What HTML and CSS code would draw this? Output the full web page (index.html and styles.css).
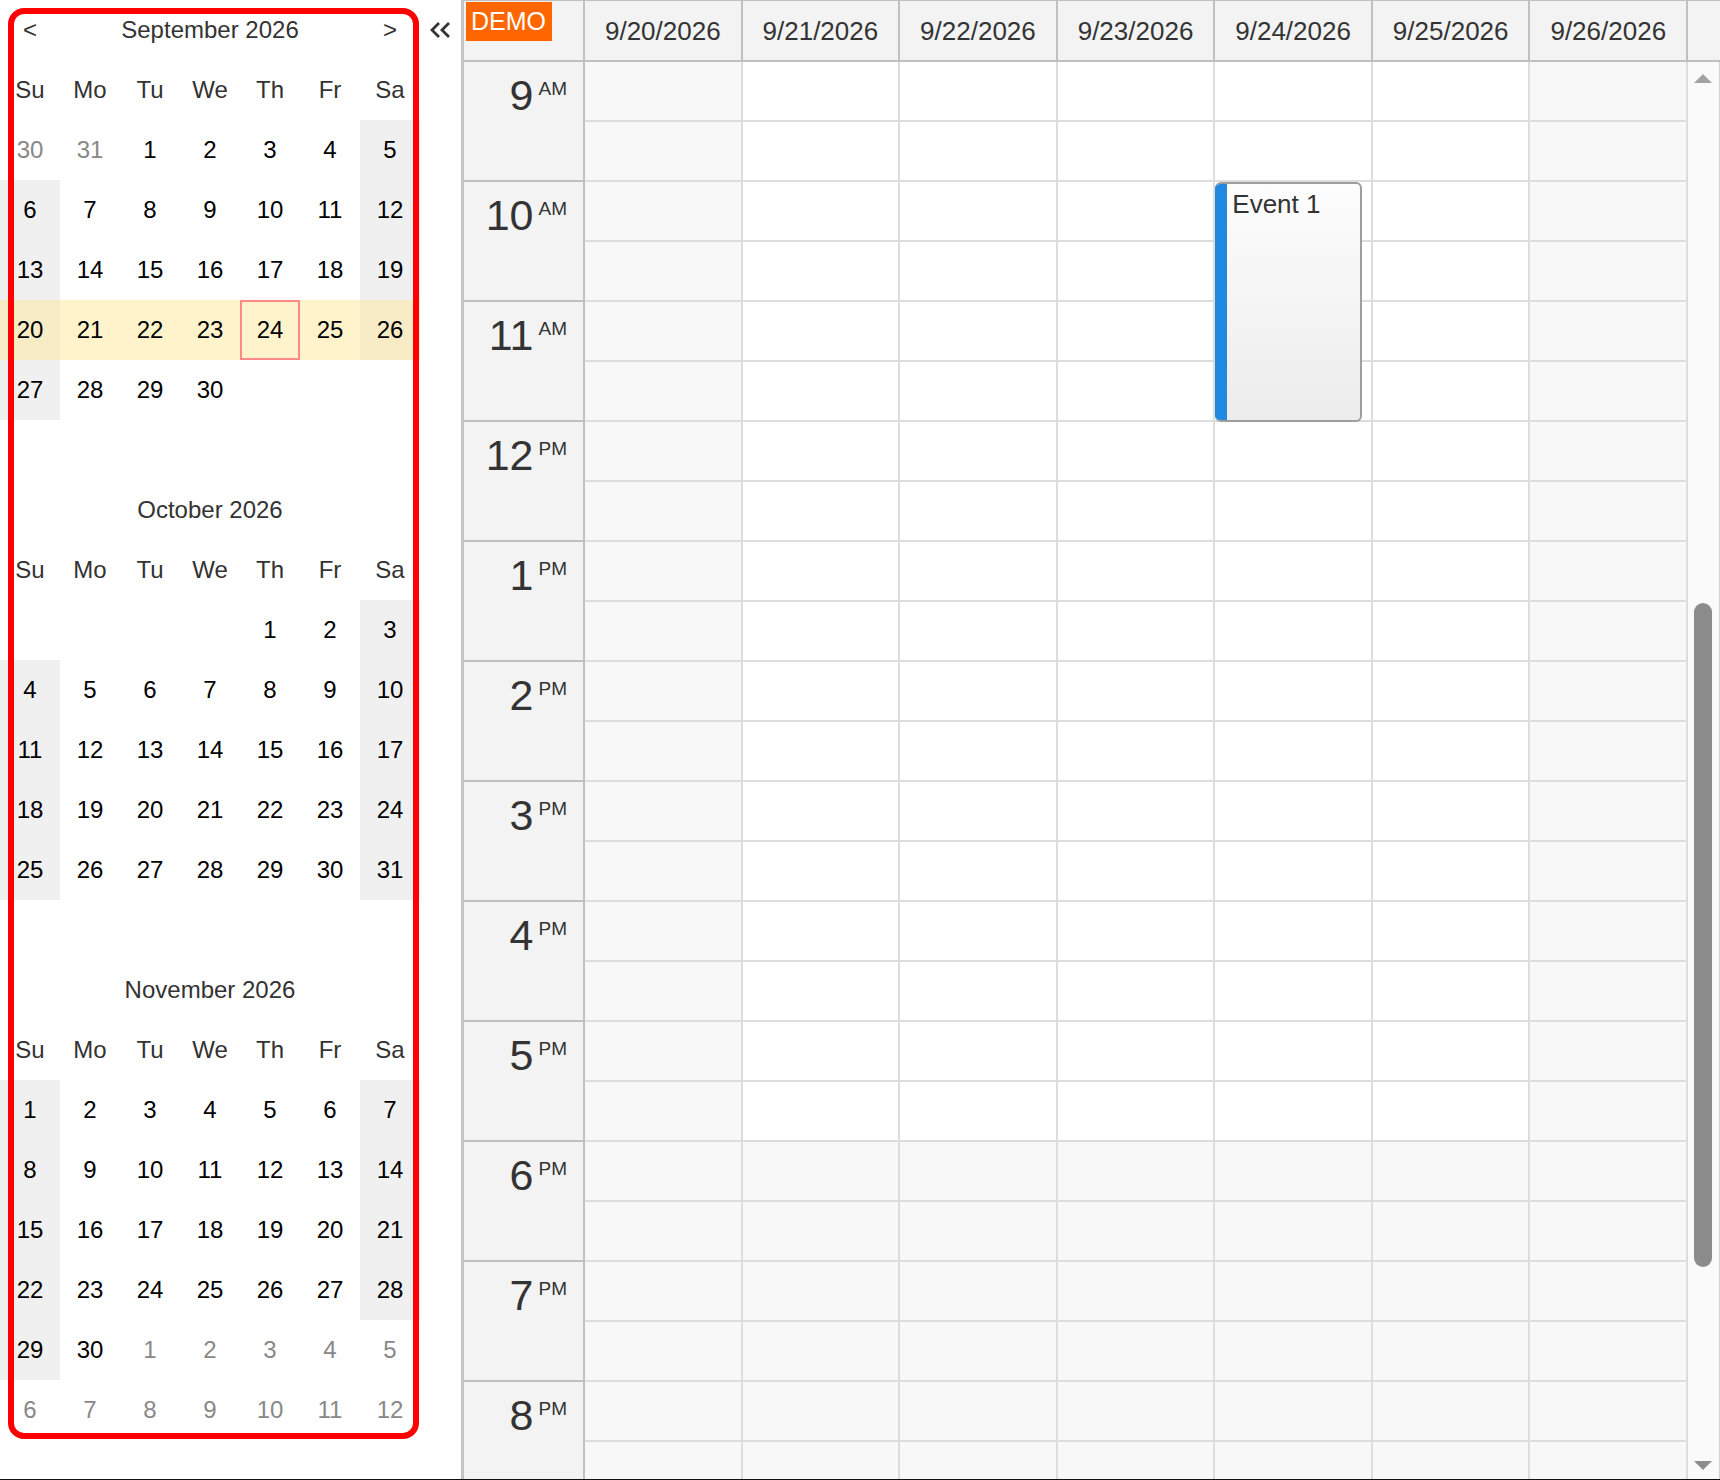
FILE: index.html
```html
<!DOCTYPE html>
<html lang="en">
<head>
  <meta charset="UTF-8" />
  <meta name="viewport" content="width=device-width, initial-scale=1.0" />
  <title>Week Calendar</title>
  <link rel="stylesheet" href="styles.css">
</head>
<body>
  <div class="page">
    <div class="nav" id="nav">
      <div class="nav-frame"></div>
    </div>

    <div class="toggle">
      <svg width="24" height="18" viewBox="0 0 24 18">
        <path d="M11 2 4 9l7 7M21 2l-7 7 7 7" fill="none" stroke="#333" stroke-width="2.8" />
      </svg>
    </div>

    <div class="calendar">
      <div class="cal-head">
        <div class="corner"><span class="demo">DEMO</span></div>
        <div class="colhead">9/20/2026</div>
        <div class="colhead">9/21/2026</div>
        <div class="colhead">9/22/2026</div>
        <div class="colhead">9/23/2026</div>
        <div class="colhead">9/24/2026</div>
        <div class="colhead">9/25/2026</div>
        <div class="colhead">9/26/2026</div>
        <div class="scroll-corner"></div>
      </div>
      <div class="cal-body">
        <div class="rowheads" id="rowheads"></div>
        <div class="days" id="days"></div>
        <div class="vscroll">
          <div class="arrow-up"></div>
          <div class="thumb"></div>
          <div class="arrow-down"></div>
        </div>
      </div>
    </div>
  </div>

  <script>
    const nav = document.getElementById('nav');
    const dayNames = ['Su','Mo','Tu','We','Th','Fr','Sa'];

    // name, weekday of the 1st, days, days in previous month, show prev/next month days
    const months = [
      { name: 'September 2026', start: 2, days: 30, prevDays: 31, prev: true, next: false, arrows: true },
      { name: 'October 2026', start: 4, days: 31, prevDays: 30, prev: false, next: false },
      { name: 'November 2026', start: 0, days: 30, prevDays: 31, prev: false, next: true }
    ];

    months.forEach(m => {
      const el = document.createElement('div');
      el.className = 'nav-month';
      let html = '';
      html += `<div class="nav-arrow">${m.arrows ? '&lt;' : ''}</div>`;
      html += `<div class="nav-title">${m.name}</div>`;
      html += `<div class="nav-arrow">${m.arrows ? '&gt;' : ''}</div>`;
      html += dayNames.map(d => `<div class="nav-dayname">${d}</div>`).join('');
      for (let i = 0; i < 42; i++) {
        const d = i - m.start + 1;
        const dow = i % 7;
        let cls = [];
        let text = '';
        if (d < 1) {
          if (m.prev) { text = m.prevDays + d; cls.push('other'); }
        } else if (d > m.days) {
          if (m.next) { text = d - m.days; cls.push('other'); }
        } else {
          text = d;
          if (dow === 0 || dow === 6) cls.push('weekend');
          if (m.arrows && d >= 20 && d <= 26) cls.push('selected');
          if (m.arrows && d === 24) cls.push('today');
        }
        html += `<div class="${cls.join(' ')}">${text}</div>`;
      }
      el.innerHTML = html;
      nav.appendChild(el);
    });

    // Row headers 9 AM .. 8 PM
    const rowheads = document.getElementById('rowheads');
    for (let h = 9; h <= 20; h++) {
      const label = h % 12 || 12;
      const suffix = h < 12 ? 'AM' : 'PM';
      rowheads.insertAdjacentHTML('beforeend',
        `<div class="rowhead"><span class="hour">${label}</span><span class="ampm">${suffix}</span></div>`);
    }

    // Day columns, half-hour cells
    const days = document.getElementById('days');
    for (let c = 0; c < 7; c++) {
      const col = document.createElement('div');
      col.className = 'day';
      const weekend = c === 0 || c === 6;
      let html = '';
      for (let i = 0; i < 24; i++) {
        const off = weekend || i >= 18;
        html += `<div class="cell${off ? ' off' : ''}"></div>`;
      }
      if (c === 4) html += '<div class="event">Event 1</div>';
      col.innerHTML = html;
      days.appendChild(col);
    }
  </script>
</body>
</html>
```

FILE: styles.css
```css
body { margin: 0; font-family: "Liberation Sans", Arial, sans-serif; background: #fff; }
.page { display: flex; height: 1479px; border-bottom: 1px solid #111; overflow: hidden; }

/* navigator */
.nav { position: relative; flex: none; width: 420px; }
.nav-month { display: grid; grid-template-columns: repeat(7, 60px); grid-auto-rows: 60px; }
.nav-month div { display: flex; align-items: center; justify-content: center; padding-bottom: 1px; font-size: 24px; color: #000; }
.nav-month .nav-title { grid-column: span 5; color: #333; }
.nav-month .nav-arrow, .nav-month .nav-dayname { color: #333; }
.nav-month .other { color: #888; }
.nav-month .weekend { background: #f0f0f0; }
.nav-month .selected { background: #fff3cc; }
.nav-month .selected.weekend { background: #f7ecc6; }
.nav-month .today { box-shadow: inset 0 0 0 2px #f88; }
.nav-frame { position: absolute; left: 8px; top: 8px; width: 411px; height: 1431px; box-sizing: border-box; border: 6px solid #f00; border-radius: 16px; pointer-events: none; }

.toggle { flex: none; width: 33px; padding: 21px 0 0 8px; }

/* calendar */
.calendar { flex: 1; min-width: 0; display: flex; flex-direction: column; border-left: 3px solid #c4c4c4; }
.cal-head { flex: none; display: flex; height: 59px; border-top: 1px solid #c0c0c0; border-bottom: 2px solid #c0c0c0; background: #f3f3f3; }
.corner { position: relative; flex: none; width: 119px; border-right: 2px solid #c0c0c0; }
.demo { position: absolute; left: 2px; top: 1px; width: 86px; height: 39px; box-sizing: border-box; padding-left: 5px; background: #ff6600; color: #fff; font-size: 25px; line-height: 39px; }
.colhead { flex: 1; min-width: 0; display: flex; align-items: center; justify-content: center; padding-top: 1px; border-right: 2px solid #c0c0c0; font-size: 26px; color: #333; }
.scroll-corner { flex: none; width: 32px; }

.cal-body { flex: 1; min-height: 0; display: flex; overflow: hidden; }
.rowheads { flex: none; width: 119px; border-right: 2px solid #c0c0c0; background: #f3f3f3; }
.rowhead { display: flex; justify-content: flex-end; align-items: flex-start; height: 120px; box-sizing: border-box; padding: 12px 16px 0 0; border-bottom: 2px solid #c0c0c0; color: #333; }
.hour { font-size: 43px; line-height: 42px; }
.ampm { font-size: 19px; line-height: 19px; margin: 5px 0 0 5px; }

.days { flex: 1; display: flex; }
.day { flex: 1; min-width: 0; position: relative; border-right: 2px solid #ddd; }
.cell { height: 58px; border-bottom: 2px solid #ddd; background: #fff; }
.cell.off { background: #f8f8f8; }
.event { position: absolute; left: 0; top: 120px; width: 147px; height: 240px; box-sizing: border-box; padding: 5px 0 0 17px; border: 2px solid #9e9e9e; border-left: 0; border-radius: 6px; overflow: hidden; background: linear-gradient(#fdfdfd, #ececec); font-size: 26px; color: #333; }
.event::before { content: ""; position: absolute; left: 0; top: 0; bottom: 0; width: 12px; background: #2188e2; }

.vscroll { flex: none; width: 32px; box-sizing: border-box; padding-top: 12px; background: #fafafa; box-shadow: inset -1px 0 #d0d0d0; }
.arrow-up { width: 0; height: 0; margin-left: 6px; border-left: 9px solid transparent; border-right: 9px solid transparent; border-bottom: 9px solid #a3a3a3; }
.thumb { width: 18px; height: 664px; margin: 520px 0 0 6px; border-radius: 9px; background: #8c8c8c; }
.arrow-down { width: 0; height: 0; margin: 194px 0 0 6px; border-left: 9px solid transparent; border-right: 9px solid transparent; border-top: 9px solid #8c8c8c; }
```
